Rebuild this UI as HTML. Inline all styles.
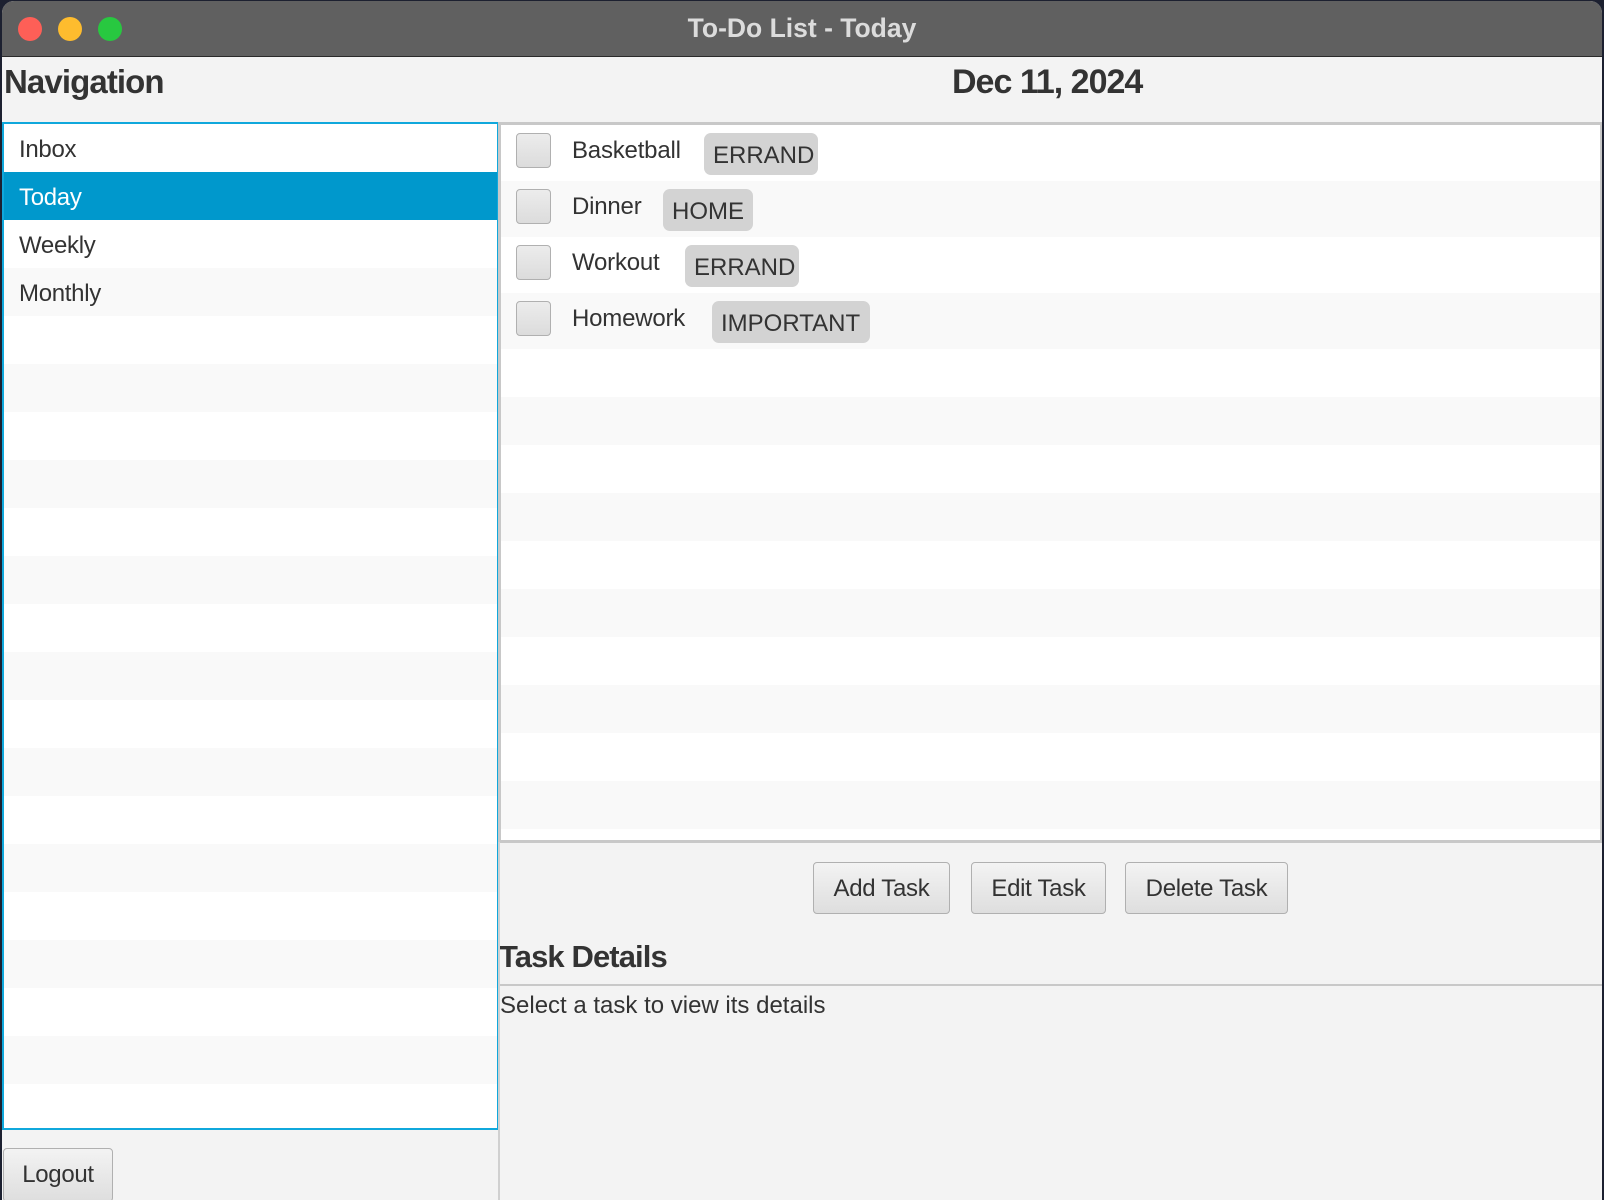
<!DOCTYPE html>
<html><head><meta charset="utf-8"><style>
*{box-sizing:border-box;margin:0;padding:0}
body{width:1604px;height:1200px;background:#1c2030;position:relative;overflow:hidden;font-family:"Liberation Sans",sans-serif;color:#333}
.win{position:absolute;left:2px;top:1px;width:1600px;height:1199px;background:#f3f3f3;border-radius:12px 12px 0 0;overflow:hidden}
.tb{position:absolute;left:0;top:0;width:100%;height:56px;background:#606060;border-bottom:1px solid #2a2a2a}
.dot{position:absolute;top:16px;width:24px;height:24px;border-radius:50%}
.ttl{position:absolute;left:0;width:100%;top:12px;text-align:center;font-weight:bold;font-size:26.5px;color:#dcdcdc}
.abs{position:absolute}
.h{font-weight:bold;font-size:32px;letter-spacing:-0.9px;color:#333}
.ll{position:absolute;left:0px;top:121px;width:497px;height:1008px;border:2px solid #10a8dc;background:#fff;overflow:hidden}
.row{height:48px;font-size:24px;padding:12px 0 0 15px;letter-spacing:-0.3px}
.odd{background:#f9f9f9}
.sel{background:#0098cc;color:#fff}
.rl{position:absolute;left:496px;top:121px;width:1105px;height:721px;border:3px solid #c8c8c8;background:#fff;overflow:hidden}
.tr{height:56px;position:relative;font-size:24px}
.er{height:48px}
.cb{position:absolute;left:15px;top:8px;width:35px;height:35px;border:1px solid #b0b0b0;border-radius:4px;background:linear-gradient(#ececec,#dcdcdc)}
.tt{position:absolute;left:71px;top:12px;letter-spacing:-0.2px}
.tag{position:absolute;top:8px;height:42px;background:#d3d3d3;border-radius:7px;padding:9px 0 0 9px;font-size:24px;color:#333}
.btn{position:absolute;height:52px;border:1px solid #b0b0b0;border-radius:4px;background:linear-gradient(#f3f3f3,#dedede);font-size:24px;text-align:center;padding-top:12px;letter-spacing:-0.3px}
</style></head><body>
<div class="win">
<div class="tb">
<div class="dot" style="left:16px;background:#fe5f57"></div>
<div class="dot" style="left:56px;background:#febc2e"></div>
<div class="dot" style="left:96px;background:#28c840"></div>
<div class="ttl">To-Do List - Today</div>
</div>
<div class="abs h" style="left:2px;top:62px;font-size:33px">Navigation</div>
<div class="abs h" style="left:950px;top:62px;font-size:34px;letter-spacing:-1px">Dec 11, 2024</div>
<div class="ll">
<div class="row">Inbox</div><div class="row sel">Today</div><div class="row">Weekly</div><div class="row odd">Monthly</div>
<div class="row"></div><div class="row odd"></div><div class="row"></div><div class="row odd"></div><div class="row"></div><div class="row odd"></div><div class="row"></div><div class="row odd"></div><div class="row"></div><div class="row odd"></div><div class="row"></div><div class="row odd"></div><div class="row"></div><div class="row odd"></div><div class="row"></div><div class="row odd"></div><div class="row"></div>
</div>
<div class="rl">
<div class="tr"><div class="cb"></div><div class="tt">Basketball</div><div class="tag" style="left:203px;width:114px">ERRAND</div></div>
<div class="tr odd"><div class="cb"></div><div class="tt">Dinner</div><div class="tag" style="left:162px;width:90px">HOME</div></div>
<div class="tr"><div class="cb"></div><div class="tt">Workout</div><div class="tag" style="left:184px;width:114px">ERRAND</div></div>
<div class="tr odd"><div class="cb"></div><div class="tt">Homework</div><div class="tag" style="left:211px;width:158px">IMPORTANT</div></div>
<div class="er"></div><div class="er odd"></div><div class="er"></div><div class="er odd"></div><div class="er"></div><div class="er odd"></div><div class="er"></div><div class="er odd"></div><div class="er"></div><div class="er odd"></div>
</div>
<div class="btn" style="left:811px;top:861px;width:137px">Add Task</div>
<div class="btn" style="left:969px;top:861px;width:135px">Edit Task</div>
<div class="btn" style="left:1123px;top:861px;width:163px">Delete Task</div>
<div class="abs h" style="left:497px;top:938px;font-size:31px">Task Details</div>
<div class="abs" style="left:496px;top:983px;width:1110px;height:2px;background:#c8c8c8"></div>
<div class="abs" style="left:496px;top:841px;width:2px;height:360px;background:#d0d0d0"></div>
<div class="abs" style="left:498px;top:991px;font-size:24px;letter-spacing:0px">Select a task to view its details</div>
<div class="btn" style="left:1px;top:1147px;width:110px;height:54px">Logout</div>
</div>
</body></html>
